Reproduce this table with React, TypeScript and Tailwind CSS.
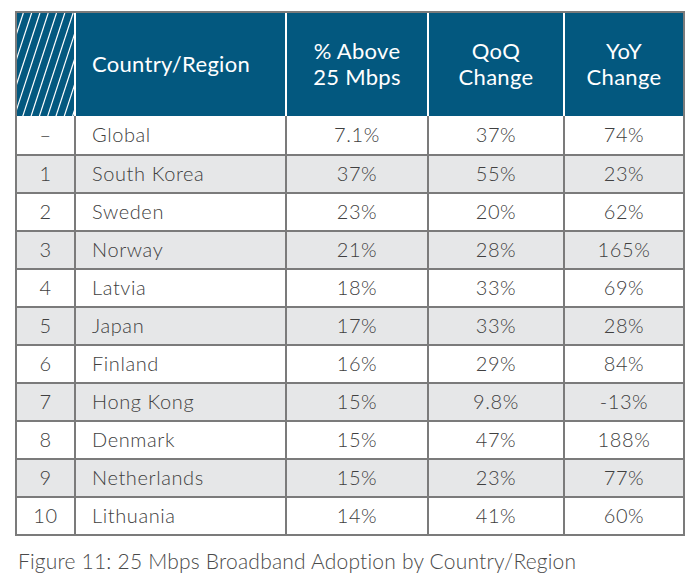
import React from 'react'

const rows = [
    { rank: '–', name: 'Global', above: '7.1%', qoq: '37%', yoy: '74%' },
    { rank: '1', name: 'South Korea', above: '37%', qoq: '55%', yoy: '23%' },
    { rank: '2', name: 'Sweden', above: '23%', qoq: '20%', yoy: '62%' },
    { rank: '3', name: 'Norway', above: '21%', qoq: '28%', yoy: '165%' },
    { rank: '4', name: 'Latvia', above: '18%', qoq: '33%', yoy: '69%' },
    { rank: '5', name: 'Japan', above: '17%', qoq: '33%', yoy: '28%' },
    { rank: '6', name: 'Finland', above: '16%', qoq: '29%', yoy: '84%' },
    { rank: '7', name: 'Hong Kong', above: '15%', qoq: '9.8%', yoy: '-13%' },
    { rank: '8', name: 'Denmark', above: '15%', qoq: '47%', yoy: '188%' },
    { rank: '9', name: 'Netherlands', above: '15%', qoq: '23%', yoy: '77%' },
    { rank: '10', name: 'Lithuania', above: '14%', qoq: '41%', yoy: '60%' },
]

function Hatch() {
    const lines = []
    for (let i = 0; i < 15; i++) {
        const xb = i * 8.3 - 36
        lines.push(<line key={i} x1={xb} y1={104} x2={xb + 34} y2={0} stroke="white" strokeWidth={1.2} />)
    }
    return (
        <svg width="57" height="103" viewBox="0 0 57 103" className="block">
            <rect width="57" height="103" fill="#03587f" />
            {lines}
        </svg>
    )
}

export default function App() {
    return (
        <div className="w-[700px] h-[581px] bg-white pt-[11px] pl-[15px]" style={{ fontFamily: 'Lato, "Noto Sans", sans-serif' }}>
            <div className="w-[670px] border-2 border-[#7b7b7b]">
                {/* header */}
                <div className="flex h-[103px] bg-[#03587f] text-white text-[22px] leading-[26px] tracking-[0.3px] font-normal">
                    <div className="w-[59px] border-r-2 border-white overflow-hidden">
                        <Hatch />
                    </div>
                    <div className="w-[211px] border-r-2 border-white flex items-center pl-[16px] pb-[2px]">
                        Country/Region
                    </div>
                    <div className="w-[142px] border-r-2 border-white flex items-center justify-center text-center pb-[2px]">
                        % Above<br />25 Mbps
                    </div>
                    <div className="w-[136px] border-r-2 border-white flex items-center justify-center text-center pb-[2px]">
                        QoQ<br />Change
                    </div>
                    <div className="flex-1 flex items-center justify-center text-center pb-[2px]">
                        YoY<br />Change
                    </div>
                </div>
                {/* body */}
                {rows.map((r, i) => (
                    <div
                        key={r.name}
                        className={`flex h-[38px] pb-[3px] text-[20px] tracking-[0.6px] font-light text-[#404040] ${i > 0 ? 'border-t-2 border-[#7b7b7b]' : ''} ${i % 2 === 1 ? 'bg-[#e6e7e8]' : 'bg-white'}`}
                    >
                        <div className="w-[59px] border-r-2 border-[#7b7b7b] -mb-[3px] pb-[3px] flex items-center justify-center">{r.rank}</div>
                        <div className="w-[211px] border-r-2 border-[#7b7b7b] -mb-[3px] pb-[3px] flex items-center pl-[16px]">{r.name}</div>
                        <div className="w-[142px] border-r-2 border-[#7b7b7b] -mb-[3px] pb-[3px] flex items-center justify-center">{r.above}</div>
                        <div className="w-[136px] border-r-2 border-[#7b7b7b] -mb-[3px] pb-[3px] flex items-center justify-center">{r.qoq}</div>
                        <div className="flex-1 -mb-[3px] pb-[3px] flex items-center justify-center">{r.yoy}</div>
                    </div>
                ))}
            </div>
            <div className="mt-[9px] pl-[3px] text-[21px] font-light text-[#4a4a4a] tracking-[0.2px]">
                Figure 11: 25 Mbps Broadband Adoption by Country/Region
            </div>
        </div>
    )
}
